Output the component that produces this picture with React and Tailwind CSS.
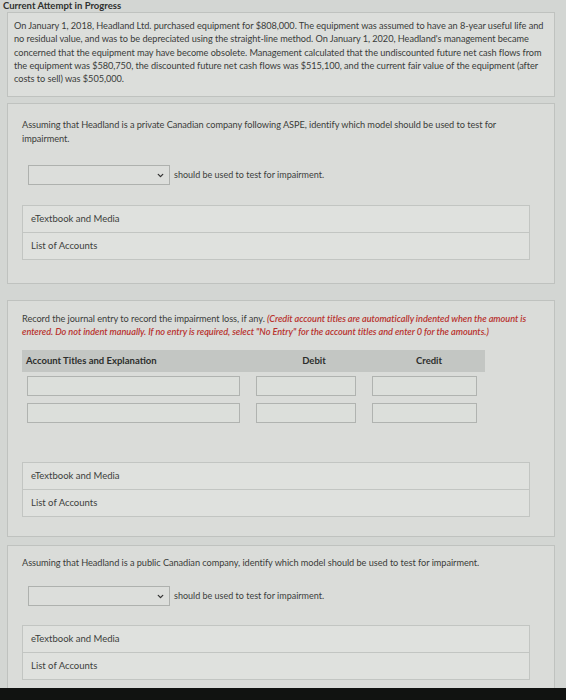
import React from "react";
import { ChevronDown } from "lucide-react";

const font = { fontFamily: "Lato, 'Open Sans', sans-serif" };

const LinkBox = ({ label }) => (
  <div className="h-[28px] border border-[#c2c5c2] bg-[#dfe1de] flex items-center px-[8px] text-[9.5px] text-[#3c3e3c] -mt-px first:mt-0">
    {label}
  </div>
);

const Links = () => (
  <div className="w-[508px] flex flex-col">
    <LinkBox label="eTextbook and Media" />
    <LinkBox label="List of Accounts" />
  </div>
);

const Select = () => (
  <div className="flex items-center gap-[4px]">
    <div className="w-[142px] h-[20px] border border-[#aeb1ae] bg-[#dcdedb] flex items-center justify-end pr-[4px]">
      <ChevronDown className="w-[9px] h-[9px] text-[#333]" strokeWidth={3.5} />
    </div>
    <span className="text-[9px] text-[#3c3e3c]">should be used to test for impairment.</span>
  </div>
);

const Field = ({ w }) => (
  <div className={`${w} h-[20px] border border-[#b0b3b0] bg-[#dcdfdb]`} />
);

export default function App() {
  return (
    <div className="w-[566px] h-[700px] overflow-hidden bg-[#d3d6d3] relative" style={font}>
      <div className="h-[10px] flex items-end px-[3px]">
        <span className="text-[9.5px] font-bold text-[#2e302e] leading-none -mt-[3px]">Current Attempt in Progress</span>
      </div>

      <div className="px-[7px] pr-[11px] flex flex-col gap-[8px] pt-[2px]">
        {/* problem statement */}
        <div className="border border-[#bfc2bf] bg-[#dcdedb] px-[6px] pt-[6px] h-[85px]">
          <p className="text-[9.2px] leading-[13.3px] text-[#3a3c3a] tracking-[-0.05px]">
            On January 1, 2018, Headland Ltd. purchased equipment for $808,000. The equipment was assumed to have an 8-year useful life and no residual value, and was to be depreciated using the straight-line method. On January 1, 2020, Headland's management became concerned that the equipment may have become obsolete. Management calculated that the undiscounted future net cash flows from the equipment was $580,750, the discounted future net cash flows was $515,100, and the current fair value of the equipment (after costs to sell) was $505,000.
          </p>
        </div>

        {/* part a */}
        <div className="border border-[#bfc2bf] bg-[#dadcd9] px-[14px] pt-[14px] h-[181px] -mt-[2px]">
          <p className="text-[9.2px] leading-[14px] text-[#3a3c3a] tracking-[-0.05px] pr-[30px]">
            Assuming that Headland is a private Canadian company following ASPE, identify which model should be used to test for impairment.
          </p>
          <div className="mt-[19px] pl-[6px]">
            <Select />
          </div>
          <div className="mt-[20px]">
            <Links />
          </div>
        </div>

        {/* part b */}
        <div className="border border-[#bfc2bf] bg-[#dadcd9] px-[14px] pt-[11px] h-[237px] mt-[8px]">
          <p className="text-[9.2px] leading-[13px] text-[#3a3c3a] tracking-[-0.05px]">
            Record the journal entry to record the impairment loss, if any.{" "}
            <span className="italic font-semibold text-[#b8322e]">
              (Credit account titles are automatically indented when the amount is entered. Do not indent manually. If no entry is required, select "No Entry" for the account titles and enter 0 for the amounts.)
            </span>
          </p>
          <div className="mt-[12px] w-[463px] h-[22px] bg-[#c3c6c3] grid grid-cols-[233px_118px_112px] items-center text-[9.5px] font-bold text-[#2c2e2c]">
            <span className="pl-[4px]">Account Titles and Explanation</span>
            <span className="text-center">Debit</span>
            <span className="text-center">Credit</span>
          </div>
          <div className="mt-[4px] flex flex-col gap-[7px] pl-[5px]">
            {[0, 1].map((i) => (
              <div key={i} className="flex gap-[16px]">
                <Field w="w-[213px]" />
                <Field w="w-[100px]" />
                <Field w="w-[105px]" />
              </div>
            ))}
          </div>
          <div className="mt-[39px]">
            <Links />
          </div>
        </div>

        {/* part c */}
        <div className="border border-[#bfc2bf] bg-[#dadcd9] px-[14px] pt-[10px] h-[160px]">
          <p className="text-[9.2px] leading-[13px] text-[#3a3c3a] tracking-[-0.05px]">
            Assuming that Headland is a public Canadian company, identify which model should be used to test for impairment.
          </p>
          <div className="mt-[17px] pl-[6px]">
            <Select />
          </div>
          <div className="mt-[19px]">
            <Links />
          </div>
        </div>
      </div>

      <div className="absolute left-0 right-0 bottom-0 h-[12px] bg-[#111311]" />
    </div>
  );
}
